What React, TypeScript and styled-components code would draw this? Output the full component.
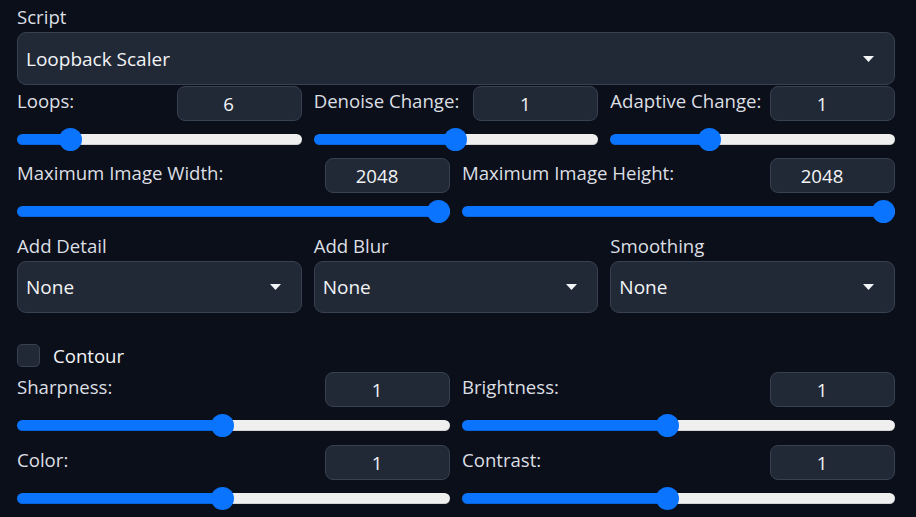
import { useState } from 'react';
import styled, { createGlobalStyle } from 'styled-components';

const colors = {
	page: '#0b0f19',
	field: '#212936',
	border: '#374151',
	label: '#dcdfe4',
	value: '#f3f4f6',
	blue: '#0a74ff',
	track: '#efefef'
};

type SliderData = {
	id: string;
	label: string;
	value: string;
	position: number;
};

type SelectData = {
	id: string;
	label: string;
	value: string;
};

const LOOP_SLIDERS: SliderData[] = [
	{ id: 'loops', label: 'Loops:', value: '6', position: 0.161 },
	{ id: 'denoise', label: 'Denoise Change:', value: '1', position: 0.5 },
	{ id: 'adaptive', label: 'Adaptive Change:', value: '1', position: 0.335 }
];

const SIZE_SLIDERS: SliderData[] = [
	{ id: 'width', label: 'Maximum Image Width:', value: '2048', position: 1 },
	{ id: 'height', label: 'Maximum Image Height:', value: '2048', position: 1 }
];

const FILTERS: SelectData[] = [
	{ id: 'detail', label: 'Add Detail', value: 'None' },
	{ id: 'blur', label: 'Add Blur', value: 'None' },
	{ id: 'smooth', label: 'Smoothing', value: 'None' }
];

const ENHANCE_TOP: SliderData[] = [
	{ id: 'sharp', label: 'Sharpness:', value: '1', position: 0.473 },
	{ id: 'bright', label: 'Brightness:', value: '1', position: 0.474 }
];

const ENHANCE_BOTTOM: SliderData[] = [
	{ id: 'color', label: 'Color:', value: '1', position: 0.473 },
	{ id: 'contrast', label: 'Contrast:', value: '1', position: 0.474 }
];

const GlobalStyle = createGlobalStyle`
	* {
		box-sizing: border-box;
	}
	body {
		margin: 0;
		background: ${colors.page};
		font-family: 'Open Sans', 'Noto Sans', sans-serif;
	}
`;

const Page = styled.div`
	width: 916px;
	height: 517px;
	overflow: hidden;
	padding: 5px 21px 0 17px;
	display: flex;
	flex-direction: column;
`;

const Section = styled.div<{ $top?: number }>`
	margin-top: ${p => p.$top ?? 0}px;
	display: flex;
	flex-direction: column;
`;

const Columns = styled.div<{ $cols: number; $top?: number }>`
	margin-top: ${p => p.$top ?? 0}px;
	display: grid;
	grid-template-columns: repeat(${p => p.$cols}, 1fr);
	column-gap: 12px;
`;

const FieldLabel = styled.span`
	display: block;
	font-size: 18.6px;
	line-height: 24px;
	color: ${colors.label};
	white-space: nowrap;
`;

const HeaderLabel = styled(FieldLabel)`
	margin-bottom: 6px;
`;

const SelectBox = styled.div<{ $height: number }>`
	margin-top: 3px;
	height: ${p => p.$height}px;
	background: ${colors.field};
	border: 1px solid ${colors.border};
	border-radius: 9px;
	padding: 0 20px 0 8px;
	display: flex;
	align-items: center;
	justify-content: space-between;
`;

const SelectValue = styled.span`
	font-size: 19px;
	color: ${colors.value};
`;

const Caret = () => (
	<svg width='11' height='6' viewBox='0 0 11 6'>
		<path d='M0 0h11L5.5 6z' fill={colors.value} />
	</svg>
);

const Select = ({ label, value, height }: { label: string; value: string; height: number }) => (
	<Section>
		<FieldLabel>{label}</FieldLabel>
		<SelectBox $height={height}>
			<SelectValue>{value}</SelectValue>
			<Caret />
		</SelectBox>
	</Section>
);

const SliderHeader = styled.div`
	height: 35px;
	display: flex;
	align-items: center;
	justify-content: space-between;
`;

const NumberBox = styled.input`
	width: 125px;
	height: 35px;
	flex-shrink: 0;
	background: ${colors.field};
	border: 1px solid ${colors.border};
	border-radius: 8px;
	color: ${colors.value};
	font-family: inherit;
	font-size: 18.6px;
	text-align: center;
	outline: none;
	padding: 0 21px 0 0;
`;

const Range = styled.input`
	-webkit-appearance: none;
	appearance: none;
	display: block;
	width: 100%;
	height: 23px;
	margin: 7px 0 0;
	background: transparent;

	&::-webkit-slider-runnable-track {
		height: 11px;
		border-radius: 6px;
		background: linear-gradient(
			to right,
			${colors.blue} 0,
			${colors.blue} var(--fill),
			${colors.track} var(--fill),
			${colors.track} 100%
		);
		box-shadow: inset 0 -1px 0 rgba(0, 0, 0, 0.12);
	}

	&::-webkit-slider-thumb {
		-webkit-appearance: none;
		width: 23px;
		height: 23px;
		margin-top: -6px;
		border-radius: 50%;
		border: none;
		background: ${colors.blue};
	}
`;

const Slider = ({ slider }: { slider: SliderData }) => {
	const [pos, setPos] = useState(slider.position * 1000);
	const fill = `calc(11.5px + ${pos / 1000} * (100% - 23px))`;

	return (
		<Section>
			<SliderHeader>
				<HeaderLabel>{slider.label}</HeaderLabel>
				<NumberBox type='text' defaultValue={slider.value} />
			</SliderHeader>
			<Range
				type='range'
				min={0}
				max={1000}
				value={pos}
				onChange={e => setPos(Number(e.target.value))}
				style={{ ['--fill' as string]: fill }}
			/>
		</Section>
	);
};

const CheckRow = styled.label`
	margin-top: 31px;
	height: 23px;
	display: flex;
	align-items: center;
	gap: 13px;
`;

const CheckBox = styled.span`
	width: 23px;
	height: 23px;
	background: ${colors.field};
	border: 1px solid ${colors.border};
	border-radius: 5px;
`;

const CheckText = styled.span`
	font-size: 18.6px;
	color: ${colors.value};
`;

export default function App() {
	return (
		<>
			<GlobalStyle />
			<Page>
				<Select label='Script' value='Loopback Scaler' height={53} />

				<Columns $cols={3} $top={1}>
					{LOOP_SLIDERS.map(s => (
						<Slider key={s.id} slider={s} />
					))}
				</Columns>

				<Columns $cols={2} $top={7}>
					{SIZE_SLIDERS.map(s => (
						<Slider key={s.id} slider={s} />
					))}
				</Columns>

				<Columns $cols={3} $top={11}>
					{FILTERS.map(f => (
						<Select key={f.id} label={f.label} value={f.value} height={52} />
					))}
				</Columns>

				<CheckRow>
					<CheckBox />
					<CheckText>Contour</CheckText>
				</CheckRow>

				<Columns $cols={2} $top={5}>
					{ENHANCE_TOP.map(s => (
						<Slider key={s.id} slider={s} />
					))}
				</Columns>

				<Columns $cols={2} $top={8}>
					{ENHANCE_BOTTOM.map(s => (
						<Slider key={s.id} slider={s} />
					))}
				</Columns>
			</Page>
		</>
	);
}
